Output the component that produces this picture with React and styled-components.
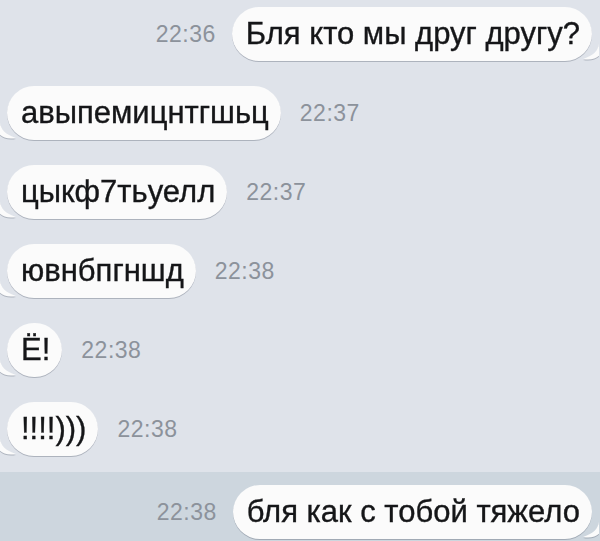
import styled, { createGlobalStyle } from 'styled-components';

const GlobalStyle = createGlobalStyle`
  html, body {
    margin: 0;
    padding: 0;
    background: #dfe3ea;
    font-family: "Liberation Sans", Arial, sans-serif;
  }
`;

const messages = [
  { id: 1, out: true, text: 'Бля кто мы друг другу?', time: '22:36' },
  { id: 2, out: false, text: 'авыпемицнтгшьц', time: '22:37' },
  { id: 3, out: false, text: 'цыкф7тьуелл', time: '22:37' },
  { id: 4, out: false, text: 'ювнбпгншд', time: '22:38' },
  { id: 5, out: false, text: 'Ё!', time: '22:38' },
  { id: 6, out: false, text: '!!!!)))', time: '22:38' },
  { id: 7, out: true, text: 'бля как с тобой тяжело', time: '22:38', selected: true },
];

function Tail({ out }) {
  return (
    <TailSvg out={out} width="17" height="17" viewBox="0 0 16 16">
      <path d="M16 0 C15 6 11 11 1 14 C7 15.5 13 14 16 11 Z" fill="#fbfbfb" />
    </TailSvg>
  );
}

function App() {
  return (
    <>
      <GlobalStyle />
      <Chat>
        {messages.map(m => (
          <Row key={m.id} out={m.out} selected={m.selected}>
            {m.out && <Time>{m.time}</Time>}
            <Bubble out={m.out}>
              {m.text}
              <Tail out={m.out} />
            </Bubble>
            {!m.out && <Time>{m.time}</Time>}
          </Row>
        ))}
      </Chat>
    </>
  );
}

export default App;

const Chat = styled.div`
  display: flex;
  flex-direction: column;
  gap: 25px;
  padding-top: 7px;
  height: 541px;
  box-sizing: border-box;
  overflow: hidden;
`;

const Row = styled.div`
  display: flex;
  align-items: center;
  justify-content: ${p => (p.out ? 'flex-end' : 'flex-start')};
  gap: ${p => (p.out ? '16px' : '19px')};
  padding: ${p => (p.out ? '0 8px 0 0' : '0 0 0 7px')};
  background: ${p => (p.selected ? '#cdd6de' : 'transparent')};
  ${p => p.selected && 'margin-top: -9px; padding-top: 13px; padding-bottom: 8px;'}
`;

const Bubble = styled.div`
  position: relative;
  height: 54px;
  display: flex;
  align-items: center;
  padding: 0 12px 0 14px;
  background: #fbfbfb;
  border-radius: 27px;
  font-size: 31px;
  color: #151618;
  -webkit-text-stroke: 0.35px #151618;
  white-space: nowrap;
  filter: drop-shadow(0 1.5px 0.5px rgba(80, 90, 105, 0.35));
`;

const TailSvg = styled.svg`
  position: absolute;
  bottom: 0;
  ${p => (p.out ? 'right: -7px;' : 'left: -7px; transform: scaleX(-1);')}
`;

const Time = styled.span`
  font-size: 23px;
  letter-spacing: 0.5px;
  color: #8c929b;
`;
